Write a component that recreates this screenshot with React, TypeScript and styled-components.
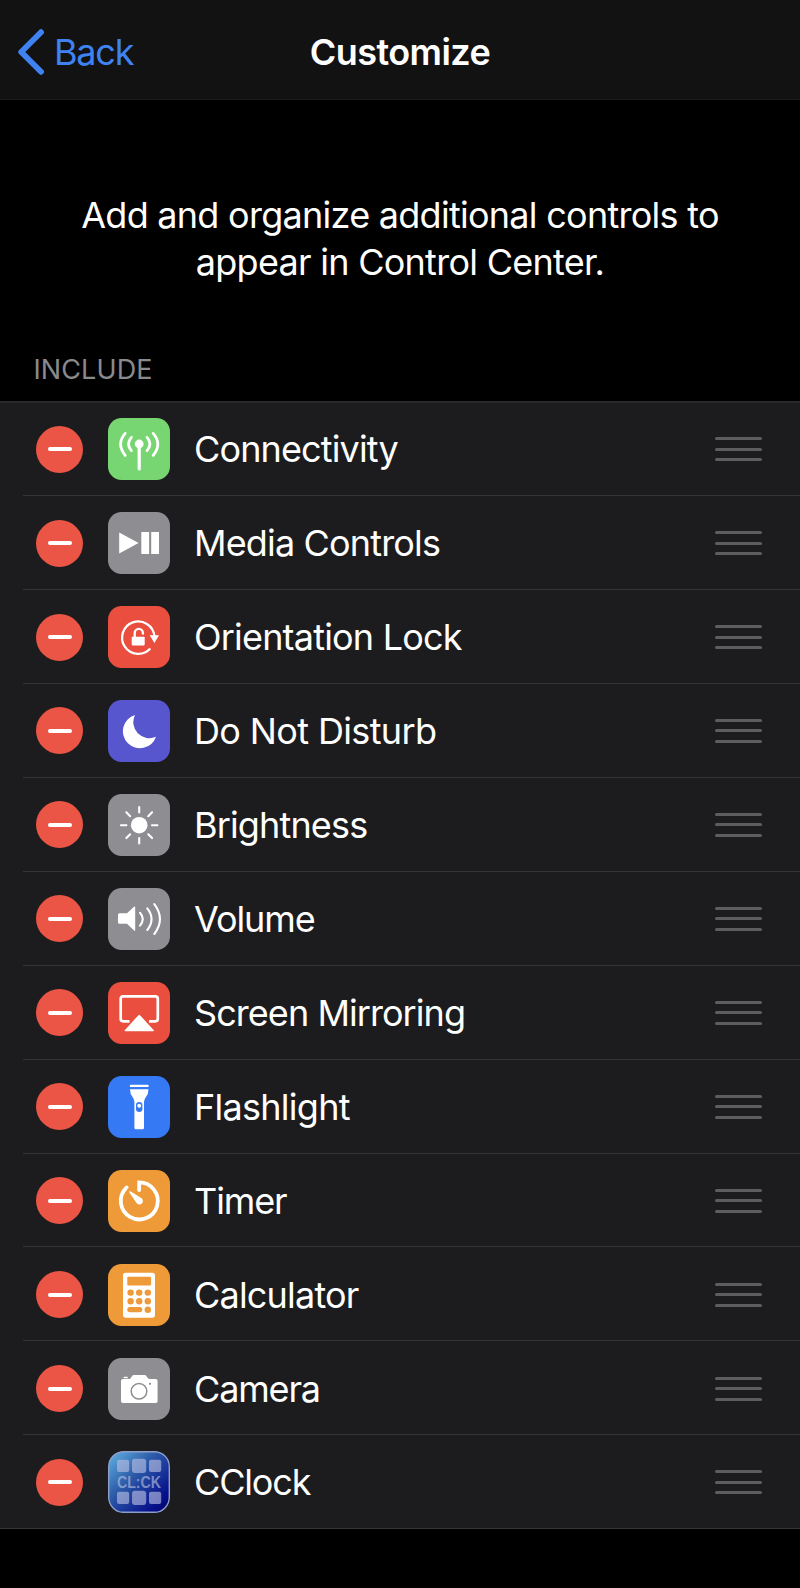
import React from "react";
import styled, { createGlobalStyle } from "styled-components";

const GlobalStyle = createGlobalStyle`
  body { margin: 0; background: #000; }
  * { box-sizing: border-box; }
`;

const Screen = styled.main`
  width: 800px;
  height: 1588px;
  overflow: hidden;
  background: #000;
  color: #fff;
  font-family: Inter, "Liberation Sans", sans-serif;
  font-size: 36px;
`;

const NavBar = styled.header`
  display: grid;
  grid-template-columns: 1fr auto 1fr;
  align-items: center;
  height: 100px;
  padding: 4px 18px 0;
  background: #121212;
  border-bottom: 1px solid #1b1b1c;
`;

const BackButton = styled.button`
  display: flex;
  align-items: center;
  gap: 10px;
  padding: 0;
  border: 0;
  background: none;
  color: #3f83f3;
  font: inherit;
  letter-spacing: -1.2px;
`;

const Title = styled.h1`
  margin: 0;
  font-size: 36px;
  font-weight: 600;
  letter-spacing: -0.55px;
`;

const Intro = styled.p`
  margin: 0;
  padding: 92px 60px 0;
  height: 246px;
  line-height: 47px;
  text-align: center;
  letter-spacing: -0.73px;
`;

const SectionTitle = styled.h2`
  margin: 0;
  height: 55px;
  padding-left: 33.5px;
  color: #8a8a8d;
  font-size: 27px;
  font-weight: 400;
  line-height: 48px;
  letter-spacing: 0.1px;
`;

const List = styled.ul`
  margin: 0;
  padding: 0;
  list-style: none;
  background: #1c1c1e;
  box-shadow: inset 0 2px #29292b;
  border-bottom: 1px solid #363638;
`;

const Row = styled.li`
  display: flex;
  align-items: center;
  height: 93.95px;
  margin-left: 23px;
  padding: 2.4px 38px 0 13px;
  & + & { box-shadow: inset 0 1px #343437; }
`;

const RemoveButton = styled.button`
  display: flex;
  align-items: center;
  justify-content: center;
  width: 47px;
  height: 47px;
  padding: 0;
  border: 0;
  border-radius: 50%;
  background: #eb5545;
  &::before {
    content: "";
    width: 24px;
    height: 4px;
    border-radius: 2px;
    background: #fff;
  }
`;

const Tile = styled.svg<{ $color: string }>`
  flex: none;
  width: 62px;
  height: 62px;
  margin: 0 24px 0 25px;
  border-radius: 13.5px;
  background: ${(p) => p.$color};
`;

const Label = styled.span<{ $spacing: number }>`
  flex: 1;
  white-space: nowrap;
  letter-spacing: ${(p) => p.$spacing}px;
`;

const Handle = styled.span`
  display: flex;
  flex-direction: column;
  gap: 7.5px;
  width: 47px;
`;

const Grip = styled.i`
  height: 3px;
  border-radius: 1.5px;
  background: #5d5d60;
`;

const GREEN = "#77d572";
const GRAY = "#8e8d92";
const RED = "#e94e3e";
const INDIGO = "#5756ce";
const BLUE = "#3579f5";
const ORANGE = "#ee9a38";

const line = { fill: "none", stroke: "#fff", strokeLinecap: "round" as const };

const Connectivity = (
  <>
    <circle cx="31.2" cy="26" r="4.4" />
    <path {...line} strokeWidth="3.2" d="M31.2 26V51" />
    <path {...line} strokeWidth="2.8" d="M23.4 19.4Q17.6 26 23.4 32.6M39 19.4Q44.8 26 39 32.6M17.2 15.4Q8 26 17.2 37.4M45.2 15.4Q54.4 26 45.2 37.4" />
  </>
);

const Media = (
  <>
    <path d="M11.2 20.6V41.4L30.6 31Z" />
    <rect x="33.3" y="20" width="7.8" height="22" rx=".5" />
    <rect x="43.2" y="20" width="7.8" height="22" rx=".5" />
  </>
);

const Orientation = (
  <>
    <path {...line} strokeLinecap="butt" strokeWidth="2.3" d="M46.4 30A16.2 16.2 0 1 0 42.3 42.5" />
    <path d="M41.7 29.3H51L46.4 37Z" />
    <rect x="23.7" y="30.8" width="13" height="8.6" rx=".8" />
    <path {...line} strokeLinecap="butt" strokeWidth="2.3" d="M26.7 31.5V27A4.1 4.1 0 0 1 34.9 27V28.6" />
  </>
);

const Moon = <path d="M27 15A17 17 0 1 0 48 36.7A16 16 0 0 1 27 15Z" />;

const Sun = (
  <>
    <circle cx="31.2" cy="31.2" r="8.3" />
    {[0, 45, 90, 135, 180, 225, 270, 315].map((angle) => (
      <path key={angle} {...line} strokeWidth="2.1" d="M31.2 18.4V13" transform={`rotate(${angle} 31.2 31.2)`} />
    ))}
  </>
);

const Volume = (
  <>
    <path d="M11.5 25.2H19L26 18.7Q27.2 18 27.2 19.2V42.2Q27.2 43.4 26 42.6L19 35.8H11.5Q10 35.8 10 34.3V26.7Q10 25.2 11.5 25.2Z" />
    <path {...line} strokeWidth="2.1" d="M32 24.8Q37.6 31 32 37.6M39.3 20.4Q47.8 31 39.3 42M46.3 16.2Q57.6 31 46.3 46" />
  </>
);

const Mirroring = (
  <>
    <path {...line} strokeLinecap="butt" strokeWidth="2.7" d="M21.5 39.3H15.2Q12.7 39.3 12.7 36.8V16.8Q12.7 14.3 15.2 14.3H47.3Q49.8 14.3 49.8 16.8V36.8Q49.8 39.3 47.3 39.3H41" />
    <path d="M30.4 33.2Q31.2 32.3 32 33.2L45.8 48.2Q46.4 49.3 45.2 49.3H17.3Q16.1 49.3 16.7 48.2Z" />
  </>
);

const Flashlight = (
  <>
    <rect x="22" y="8.7" width="18.5" height="2.3" rx=".5" />
    <path d="M22 13.2H40.5Q40.5 18.2 37.8 21.2Q36 23.3 36 26V51.7Q36 53.3 34.4 53.3H28Q26.4 53.3 26.4 51.7V26Q26.4 23.3 24.7 21.2Q22 18.2 22 13.2Z" />
    <rect x="28" y="26" width="6.4" height="10" rx="3.2" fill={BLUE} />
    <circle cx="31.2" cy="29.8" r="2" />
  </>
);

const Timer = (
  <>
    <path {...line} strokeLinejoin="miter" strokeWidth="3.8" strokeLinecap="butt" d="M31.2 20V12.4A18.5 18.5 0 1 1 18.2 17.8" />
    <circle cx="18.7" cy="17.3" r="1.8" />
    <circle cx="31.2" cy="20" r="1.9" />
    <path d="M21.2 22.3Q20.9 20.9 22.3 21.2L33.3 28.1A3.5 3.5 0 1 1 28.5 33Z" />
  </>
);

const Calculator = (
  <>
    <rect x="15" y="8.7" width="32" height="45" rx="2.7" />
    <g fill={ORANGE}>
      <rect x="19.3" y="12.7" width="23.8" height="8.8" rx="1" />
      {[28.6, 37.2].map((cy) => [22.6, 31.2, 39.8].map((cx) => <circle key={`${cx}-${cy}`} cx={cx} cy={cy} r="3.2" />))}
      <rect x="19.3" y="43" width="15" height="5.2" rx="2.6" />
      <circle cx="39.8" cy="45.7" r="3.2" />
    </g>
  </>
);

const Camera = (
  <>
    <path d="M15 21H20.5Q22.4 21 23.2 19.5L24 18Q24.6 17 26 17H36.5Q37.8 17 38.4 18L39.3 19.6Q40 21 41.8 21H47.6Q49.6 21 49.6 23V43Q49.6 45 47.6 45H15Q13 45 13 43V23Q13 21 15 21Z" />
    <rect x="15.5" y="18.8" width="4.4" height="1.5" rx=".7" />
    <circle cx="31" cy="33.2" r="7.8" fill="none" stroke={GRAY} strokeWidth="1.5" />
    <circle cx="42" cy="25.8" r="1.1" fill={GRAY} />
  </>
);

const CClock = (
  <>
    <defs>
      <linearGradient id="clockFace" x1="0" y1="0" x2="1" y2="1">
        <stop offset="0" stopColor="#62b5e3" />
        <stop offset=".4" stopColor="#2c5aa8" />
        <stop offset=".82" stopColor="#06108a" />
        <stop offset="1" stopColor="#010066" />
      </linearGradient>
    </defs>
    <rect x=".7" y=".7" width="60.6" height="60.6" rx="15" fill="url(#clockFace)" stroke="#8d9dcc" strokeWidth="1.4" />
    <g fill="#b7bee2" fillOpacity=".64">
      {[8.8, 40.8].map((y) => (
        <React.Fragment key={y}>
          <rect x="9" y={y} width="12.2" height="12.2" rx="2" />
          <rect x="24" y={y - 1} width="14.2" height="14.2" rx="3" />
          <rect x="41" y={y} width="12.2" height="12.2" rx="2" />
        </React.Fragment>
      ))}
      <text x="9" y="37" textLength="44" lengthAdjust="spacingAndGlyphs" fontFamily="Liberation Sans, sans-serif" fontSize="15.7" fontWeight="700">CL:CK</text>
    </g>
  </>
);

const controls = [
  { name: "Connectivity", color: GREEN, icon: Connectivity, spacing: -0.86 },
  { name: "Media Controls", color: GRAY, icon: Media, spacing: -0.84 },
  { name: "Orientation Lock", color: RED, icon: Orientation, spacing: -0.8 },
  { name: "Do Not Disturb", color: INDIGO, icon: Moon, spacing: -0.63 },
  { name: "Brightness", color: GRAY, icon: Sun, spacing: -0.85 },
  { name: "Volume", color: GRAY, icon: Volume, spacing: -1.1 },
  { name: "Screen Mirroring", color: RED, icon: Mirroring, spacing: -0.94 },
  { name: "Flashlight", color: BLUE, icon: Flashlight, spacing: -0.73 },
  { name: "Timer", color: ORANGE, icon: Timer, spacing: -1.1 },
  { name: "Calculator", color: ORANGE, icon: Calculator, spacing: -0.8 },
  { name: "Camera", color: GRAY, icon: Camera, spacing: -1.15 },
  { name: "CClock", color: "transparent", icon: CClock, spacing: -1.15 },
];

export default function App() {
  return (
    <Screen>
      <GlobalStyle />
      <NavBar>
        <BackButton>
          <svg width="26" height="46" viewBox="0 0 26 46" fill="none" stroke="currentColor" strokeWidth="5.8" strokeLinecap="round" strokeLinejoin="round">
            <path d="M23 3.2L3.2 23L23 42.8" />
          </svg>
          Back
        </BackButton>
        <Title>Customize</Title>
      </NavBar>
      <Intro>
        Add and organize additional controls to
        <br />
        appear in Control Center.
      </Intro>
      <SectionTitle>INCLUDE</SectionTitle>
      <List>
        {controls.map(({ name, color, icon, spacing }) => (
          <Row key={name}>
            <RemoveButton aria-label={`Remove ${name}`} />
            <Tile $color={color} viewBox="0 0 62 62" fill="#fff" aria-hidden>
              {icon}
            </Tile>
            <Label $spacing={spacing}>{name}</Label>
            <Handle aria-hidden>
              <Grip />
              <Grip />
              <Grip />
            </Handle>
          </Row>
        ))}
      </List>
    </Screen>
  );
}
